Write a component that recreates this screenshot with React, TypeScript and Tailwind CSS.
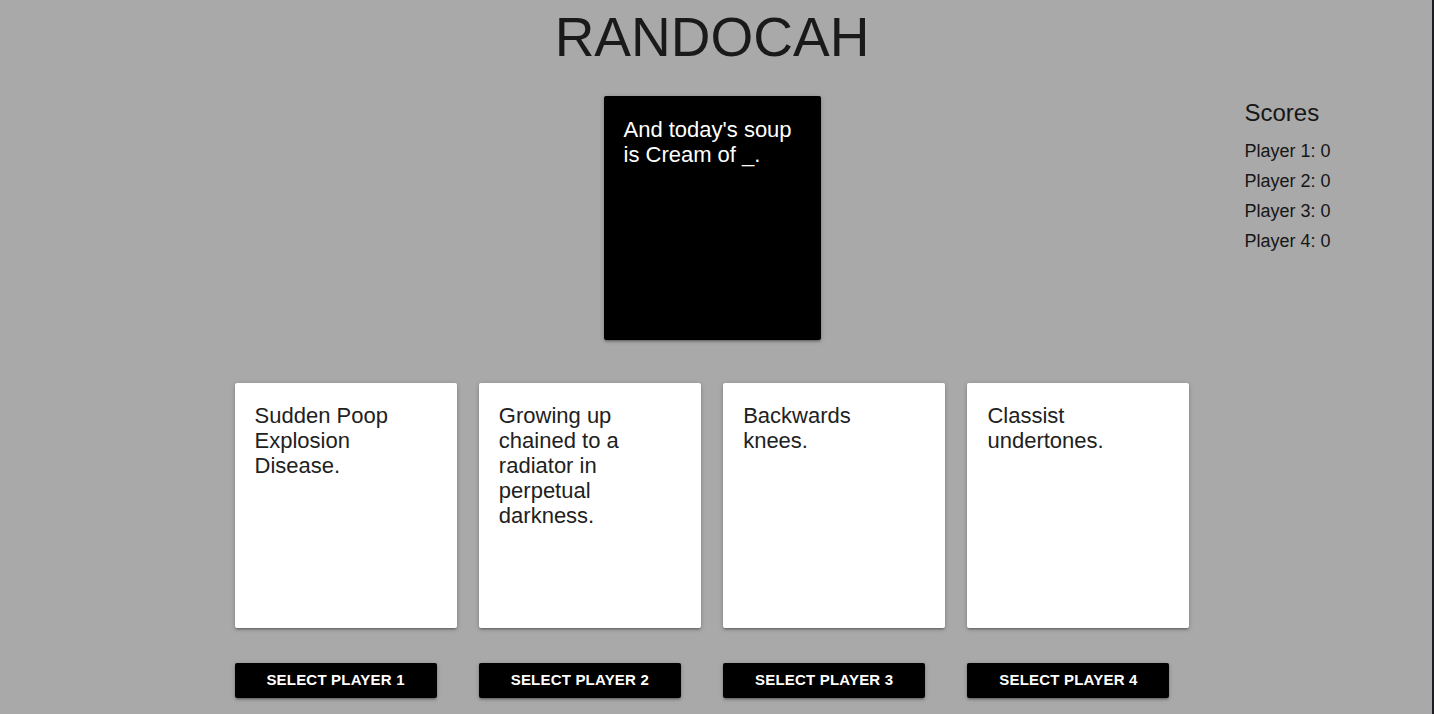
const hand = [
  "Sudden Poop Explosion Disease.",
  "Growing up chained to a radiator in perpetual darkness.",
  "Backwards knees.",
  "Classist undertones.",
]

const scores = [0, 0, 0, 0]

const shadow = "shadow-[0_2px_2px_0_rgba(0,0,0,0.14),0_3px_1px_-2px_rgba(0,0,0,0.12),0_1px_5px_0_rgba(0,0,0,0.2)]"

export default function App() {
  return (
    <div className="flex min-h-[714px] bg-[#a9a9a9] font-['Liberation_Sans',Arial,sans-serif] text-[#161616]">
      <main className="flex w-[1424px] flex-col items-center">
        <h1 className="mt-[10px] text-[55px] leading-none font-normal text-[#1a1a1a]">RANDOCAH</h1>

        <div className="mt-[31px] grid w-full grid-cols-[1fr_217px_1fr]">
          <div />
          <div className={`h-[244px] w-[217px] rounded-[2px] bg-black px-5 pt-[21px] text-[22px] leading-[25px] text-white ${shadow}`}>
            And today's soup is Cream of _.
          </div>
          <div className="pl-[424px] pt-[2px]">
            <h2 className="text-[24px] leading-[30px]">Scores</h2>
            <ul className="mt-[8px]">
              {scores.map((s, i) => (
                <li key={i} className="text-[18px] leading-[30px] whitespace-nowrap">
                  Player {i + 1}: {s}
                </li>
              ))}
            </ul>
          </div>
        </div>

        <div className="mt-[43px] flex gap-[22.3px]">
          {hand.map((text, i) => (
            <div key={i} className="flex w-[222px] flex-col">
              <div className={`h-[245px] rounded-[2px] bg-white pt-[20px] pr-[28px] pl-5 text-[22px] leading-[25px] text-[#212121] ${shadow}`}>
                {text}
              </div>
              <button
                className={`mt-[35px] h-[35px] w-[202px] rounded-[2px] bg-black text-[15px] font-bold tracking-[0.2px] text-white uppercase ${shadow}`}
              >
                Select Player {i + 1}
              </button>
            </div>
          ))}
        </div>
      </main>
      <div className="flex-1" />
      <div className="w-[2px] bg-[#1c1c22]" />
    </div>
  )
}
